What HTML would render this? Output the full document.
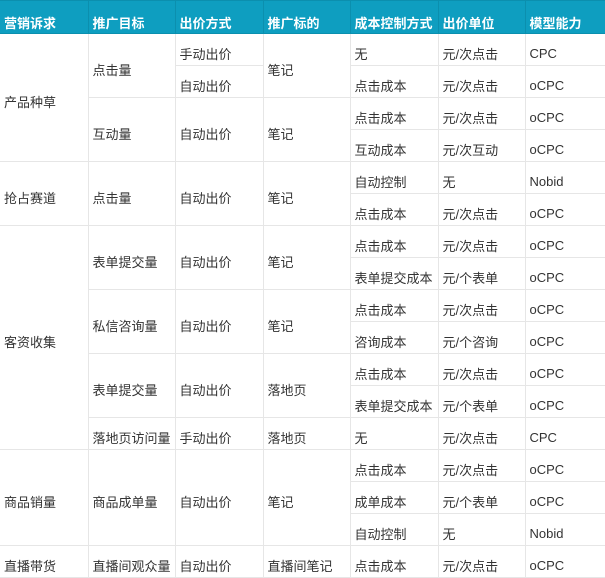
<!DOCTYPE html>
<html><head><meta charset="utf-8"><style>
html,body{margin:0;padding:0;background:#fff;width:605px;height:578px;overflow:hidden}
table{border-collapse:collapse;table-layout:fixed;width:605px;font-family:"Liberation Sans","Noto Sans CJK SC",sans-serif;font-size:13px;color:#333}
td,th{border:1px solid #e6e6e6;padding:8px 0 0 4px;height:23px;vertical-align:middle;text-align:left;white-space:nowrap;overflow:hidden}
th{background:#0e9ec0;color:#fff;font-weight:bold;border-color:#0b8fae;height:22px;padding-top:10px}
tr td:first-child,tr th:first-child{border-left:none}
tr td:last-child,tr th:last-child{border-right:none}
</style></head><body>
<table>
<colgroup><col style="width:88px"><col style="width:87px"><col style="width:88px"><col style="width:87px"><col style="width:88px"><col style="width:87px"><col style="width:80px"></colgroup>
<tr><th>营销诉求</th><th>推广目标</th><th>出价方式</th><th>推广标的</th><th>成本控制方式</th><th>出价单位</th><th>模型能力</th></tr>
<tr><td rowspan="4">产品种草</td><td rowspan="2">点击量</td><td>手动出价</td><td rowspan="2">笔记</td><td>无</td><td>元/次点击</td><td>CPC</td></tr>
<tr><td>自动出价</td><td>点击成本</td><td>元/次点击</td><td>oCPC</td></tr>
<tr><td rowspan="2">互动量</td><td rowspan="2">自动出价</td><td rowspan="2">笔记</td><td>点击成本</td><td>元/次点击</td><td>oCPC</td></tr>
<tr><td>互动成本</td><td>元/次互动</td><td>oCPC</td></tr>
<tr><td rowspan="2">抢占赛道</td><td rowspan="2">点击量</td><td rowspan="2">自动出价</td><td rowspan="2">笔记</td><td>自动控制</td><td>无</td><td>Nobid</td></tr>
<tr><td>点击成本</td><td>元/次点击</td><td>oCPC</td></tr>
<tr><td rowspan="7">客资收集</td><td rowspan="2">表单提交量</td><td rowspan="2">自动出价</td><td rowspan="2">笔记</td><td>点击成本</td><td>元/次点击</td><td>oCPC</td></tr>
<tr><td>表单提交成本</td><td>元/个表单</td><td>oCPC</td></tr>
<tr><td rowspan="2">私信咨询量</td><td rowspan="2">自动出价</td><td rowspan="2">笔记</td><td>点击成本</td><td>元/次点击</td><td>oCPC</td></tr>
<tr><td>咨询成本</td><td>元/个咨询</td><td>oCPC</td></tr>
<tr><td rowspan="2">表单提交量</td><td rowspan="2">自动出价</td><td rowspan="2">落地页</td><td>点击成本</td><td>元/次点击</td><td>oCPC</td></tr>
<tr><td>表单提交成本</td><td>元/个表单</td><td>oCPC</td></tr>
<tr><td>落地页访问量</td><td>手动出价</td><td>落地页</td><td>无</td><td>元/次点击</td><td>CPC</td></tr>
<tr><td rowspan="3">商品销量</td><td rowspan="3">商品成单量</td><td rowspan="3">自动出价</td><td rowspan="3">笔记</td><td>点击成本</td><td>元/次点击</td><td>oCPC</td></tr>
<tr><td>成单成本</td><td>元/个表单</td><td>oCPC</td></tr>
<tr><td>自动控制</td><td>无</td><td>Nobid</td></tr>
<tr><td>直播带货</td><td>直播间观众量</td><td>自动出价</td><td>直播间笔记</td><td>点击成本</td><td>元/次点击</td><td>oCPC</td></tr>
</table>
</body></html>
